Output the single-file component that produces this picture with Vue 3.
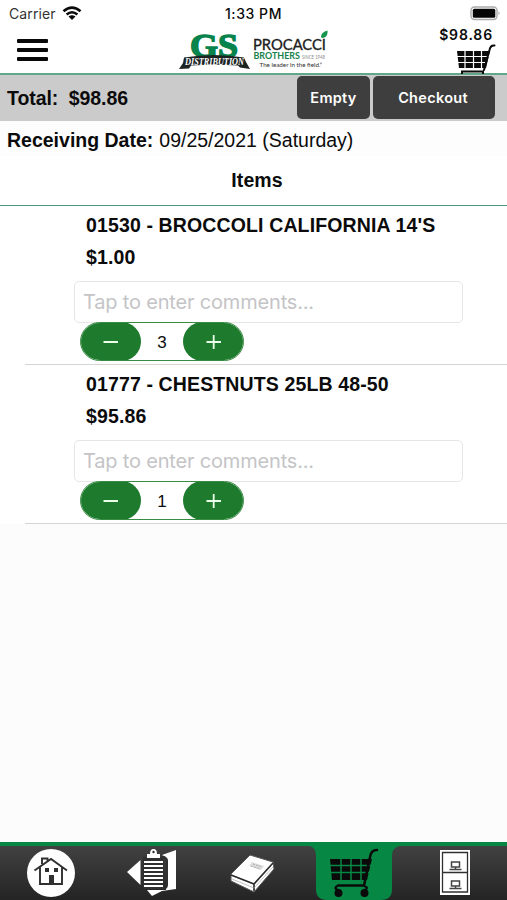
<script setup>
import { ref, computed } from 'vue'

const items = ref([
  { title: "01530 - BROCCOLI CALIFORNIA 14'S", price: '$1.00', qty: 3 },
  { title: '01777 - CHESTNUTS 25LB 48-50', price: '$95.86', qty: 1 },
])
const total = computed(() => '$98.86')
</script>

<template>
  <div class="screen">
    <header class="header">
      <div class="left">
        <div class="carrier">
          <span>Carrier</span>
          <svg class="wifi" width="20" height="15" viewBox="0 0 20 15">
            <path d="M1.5 5.300Q10-2 18.500 5.300M4.600 8.500Q10 4 15.400 8.500" fill="none" stroke="#0b0b0b" stroke-width="2.600" />
            <path d="M6.500 10.600Q10 7.800 13.500 10.600L10 14Z" fill="#0b0b0b" />
          </svg>
        </div>
        <div class="menu"><i></i><i></i><i></i></div>
      </div>
      <div class="middle">
        <div class="clock"><span>1:33 PM</span></div>
        <svg class="logo" width="156" height="46" viewBox="175 26 156 46">
          <g font-family="Liberation Serif, serif" font-weight="bold">
            <text x="190" y="56.500" font-size="33.500" textLength="48" lengthAdjust="spacingAndGlyphs" fill="#07834c" stroke="#07834c" stroke-width="1.500">GS</text>
            <path d="M184 57.500Q214 52.500 244 57.500L246 62L250 69L240 67.500L238 65.500Q214 64 191 65.500L189 68.500L179 69L183 63Z" fill="#1c2323" />
            <text x="185" y="64.600" font-size="9.500" font-style="italic" textLength="59" lengthAdjust="spacingAndGlyphs" fill="#fff">DISTRIBUTION</text>
          </g>
          <g font-family="Lato, sans-serif">
            <text x="253" y="49.700" font-size="16" textLength="73" lengthAdjust="spacingAndGlyphs" fill="#202020" stroke="#202020" stroke-width=".35">PROCACCI</text>
            <text x="253.500" y="58.700" font-size="9.300" font-weight="bold" textLength="46.500" lengthAdjust="spacingAndGlyphs" fill="#16824c">BROTHERS</text>
            <text x="302" y="58.700" font-size="4.800" textLength="23" lengthAdjust="spacingAndGlyphs" fill="#8a8a8a">SINCE 1948</text>
            <text x="259.500" y="67.300" font-size="6.500" textLength="62.500" lengthAdjust="spacingAndGlyphs" fill="#303030">The leader in the field.”</text>
          </g>
          <path d="M321 37Q321 32 327.500 30.500Q328 36 324.500 37.500L322 38Z" fill="#16964d" />
        </svg>
      </div>
      <div class="right">
        <svg class="battery" width="31" height="15" viewBox="0 0 31 15">
          <rect x="1" y="1" width="26" height="12.500" rx="3.500" fill="#fff" stroke="#aaa" stroke-width="1.400" />
          <rect x="2.800" y="2.800" width="22.500" height="9" rx="1.500" fill="#050505" />
          <path d="M28.500 5.500Q31 7.200 28.500 9Z" fill="#aaa" />
        </svg>
        <span class="amount">{{ total }}</span>
        <svg class="minicart" width="41" height="30" viewBox="0 0 41 30">
          <path d="M2 7H35L31 24H4Z" fill="#0b0b0b" />
          <path d="M2 12.500H34M2 18.500H32M10 6V25M18.500 6V25M26.500 6V25" stroke="#fff" stroke-width="1.200" />
          <path d="M39.500 1.500Q35.500 1 34.500 6L29 26M7 30V27.500H28V30" fill="none" stroke="#0b0b0b" stroke-width="2" stroke-linecap="round" />
        </svg>
      </div>
    </header>

    <section class="total">
      <span class="sum">Total:&nbsp; {{ total }}</span>
      <button class="empty">Empty</button>
      <button class="checkout">Checkout</button>
    </section>
    <section class="date"><b>Receiving Date:</b><span>09/25/2021 (Saturday)</span></section>
    <h2 class="heading"><span>Items</span></h2>

    <main>
      <article v-for="item in items" :key="item.title" class="item">
        <div class="title">{{ item.title }}</div>
        <div class="price">{{ item.price }}</div>
        <input class="comment" placeholder="Tap to enter comments..." />
        <div class="stepper">
          <button><svg width="18" height="18" viewBox="0 0 18 18"><path d="M1.500 9H16" stroke="#e9ffe9" stroke-width="1.800" /></svg></button>
          <span>{{ item.qty }}</span>
          <button><svg width="18" height="18" viewBox="0 0 18 18"><path d="M1.500 9H16M8.700 2V16" stroke="#e9ffe9" stroke-width="1.800" /></svg></button>
        </div>
      </article>
    </main>

    <nav class="tabs">
      <svg width="102" height="58" viewBox="0 842 102 58">
        <circle cx="51" cy="873" r="24" fill="#fff" />
        <g fill="none" stroke="#303030" stroke-width="1.900">
          <path d="M40 867V884H62V867M34.500 870.500L51 859L67 870.500M42 864V858.500H47.500V861" />
        </g>
        <path d="M45 868h4v4h-4zM54 868h4v4h-4zM49 875h5v9h-5z" fill="#303030" />
      </svg>
      <svg width="102" height="58" viewBox="102 842 102 58">
        <path d="M127 872L140.500 860V885ZM162 855L176 850V889L162 891L152 896L147 890H166V857Z" fill="#fff" />
        <path d="M143 857H164V889H143Z" fill="#303030" />
        <path d="M147 858V854H150Q150 849 153.500 849Q157 849 157 854H160V858Z" fill="#fff" />
        <circle cx="153.500" cy="852" r="1.200" fill="#303030" />
        <path d="M144 862H163M144 866H163M144 870H163M144 874H163M144 878H163M144 882H163M144 886H163" stroke="#fff" stroke-width="1.800" />
        <path d="M162 857Q166 857 167 860V885Q167 888 163 889" fill="none" stroke="#303030" stroke-width="2" />
      </svg>
      <svg width="102" height="58" viewBox="204 842 102 58">
        <path d="M231 874L250 855L273 862L274 869L254 892L231 881Z" fill="#fff" stroke="#555" stroke-width="1" />
        <path d="M231 875L254 884L273 863M254 884V891" fill="none" stroke="#292929" stroke-width="1.600" />
        <path d="M232 879L254 888L273 867" fill="none" stroke="#999" stroke-width=".6" />
        <path d="M252 862L264 866L261 870L249 866Z" fill="#ddd" />
        <path d="M253 864L262 867M251 866L260 869" stroke="#999" stroke-width=".7" stroke-dasharray="2 1" />
      </svg>
      <svg width="102" height="58" viewBox="306 842 102 58">
        <path d="M310 846H399Q392 848 392 856V889Q392 900 381 900H327Q316 900 316 889V856Q316 848 310 846Z" fill="#078744" />
        <path d="M330 859H372L367 880H332Z" fill="#0a0a0a" />
        <path d="M329 865.500H371M330 872.500H371M341 858V881M351 858V881M361 858V881" stroke="#078744" stroke-width="1.500" />
        <path d="M377 850Q371 850 370 857L364 885.500H338Q333 888 338 890" fill="none" stroke="#0a0a0a" stroke-width="2.500" stroke-linecap="round" />
        <path d="M364 886Q370 888 364 890" fill="none" stroke="#0a0a0a" stroke-width="2" />
        <circle cx="338.500" cy="893" r="4" fill="#0a0a0a" />
        <circle cx="364.500" cy="893" r="4" fill="#0a0a0a" />
      </svg>
      <svg width="99" height="58" viewBox="408 842 99 58">
        <path d="M440 850H470V895H440Z" fill="#fff" />
        <path d="M442.500 852.500H467.500V892H442.500ZM442.500 872.500H467.500" fill="none" stroke="#303030" stroke-width="1.300" />
        <path d="M451.500 862h8v5h-8zM449.500 869.500h12M455.500 867v3M451.500 881h8v5h-8zM449.500 888.500h12M455.500 886v3" fill="none" stroke="#444" stroke-width="1.500" />
      </svg>
    </nav>
  </div>
</template>

<style>
body { margin: 0; background: #fdfdfd; }
</style>
<style scoped>
* { box-sizing: border-box; }
.screen { width: 507px; height: 900px; display: flex; flex-direction: column; overflow: hidden; background: #fcfcfc; color: #0b0b0b; font-family: "Liberation Sans", sans-serif; }
button { border: 0; padding: 0; font: inherit; }
svg { display: block; flex: none; }
.header { height: 75px; flex: none; display: flex; background: #fff; border-bottom: 2px solid #62a78b; }
.left { width: 175px; }
.carrier { height: 26px; display: flex; align-items: center; gap: 6px; padding: 1px 0 0 9px; font: 14px Inter, sans-serif; letter-spacing: .1px; color: #333; }
.menu { display: flex; flex-direction: column; gap: 5px; padding: 13px 0 0 16.500px; }
.menu i { width: 31.500px; height: 4px; background: #080808; border-radius: 1px; }
.middle { width: 156px; }
.clock { height: 26px; padding: 5px 0 0 50px; font: 500 14px/18px Inter, sans-serif; letter-spacing: .55px; white-space: nowrap; }
.logo { overflow: visible; }
.right { flex: 1; display: flex; flex-direction: column; align-items: flex-end; padding: 6px 6px 0 0; }
.amount { font: 600 14px/18px Inter, sans-serif; letter-spacing: .85px; margin: 5px 8px 0 0; }
.minicart { margin: 0 5px 0 0; }
.total { height: 46px; flex: none; display: flex; align-items: flex-start; gap: 3px; padding: 1px 12px 0 7px; background: #cbcbcb; }
.sum { flex: 1; padding-top: 10px; font-size: 19.500px; letter-spacing: -.08px; font-weight: bold; line-height: 24px; }
.total button { height: 43px; padding-bottom: 1px; border-radius: 5px; background: #3e3e3e; color: #fff; font: 600 14.500px Inter, sans-serif; letter-spacing: .3px; }
.empty { width: 73px; }
.checkout { width: 122px; }
.total .checkout { padding-right: 2px; }
.date { height: 35px; flex: none; display: flex; gap: 6px; padding: 7px; font-size: 19.500px; line-height: 24px; white-space: nowrap; background: #fdfdfd; }
.heading { height: 50px; margin: 0; flex: none; text-align: center; padding: 12px 0 0 7px; font-size: 19.500px; letter-spacing: .1px; line-height: 24px; background: #fff; border-bottom: 1px solid #4a9b7b; }
main { background: #fff; }
.item { height: 159px; margin-left: 25px; padding: 7px 0 0 49px; border-bottom: 1px solid #d5d5d5; }
.title, .price { margin-left: 12px; font-size: 19.500px; letter-spacing: .13px; line-height: 24px; font-weight: bold; white-space: nowrap; }
.price { margin-top: 8px; }
.comment { display: block; width: 389px; height: 42px; margin-top: 12px; padding: 0 8px; border: 1px solid #e6e6e6; border-radius: 5px; background: #fff; font: 20px Inter, sans-serif; letter-spacing: -.18px; }
.comment::placeholder { color: #c4c4c6; opacity: 1; }
.stepper { width: 164px; height: 39px; margin: -1px 0 0 6px; display: flex; border: 1px solid #388b42; border-radius: 20px; overflow: hidden; font-size: 17px; background: #fff; }
.stepper button { width: 61px; height: 39px; margin: -1px; display: flex; align-items: center; justify-content: center; border-radius: 20px; background: #1e7b2e; }
.stepper span { flex: 1; text-align: center; line-height: 39px; }
.tabs { height: 58px; margin-top: auto; display: flex; flex: none; background: linear-gradient(#078744 0 4px, #414141 4px, #242424 100%); }
</style>
